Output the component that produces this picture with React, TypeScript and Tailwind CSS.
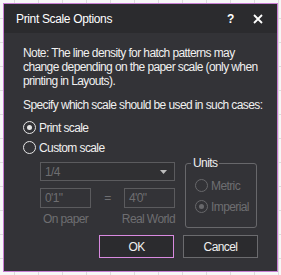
import React from "react";

const font = { fontFamily: '"Liberation Sans", Arial, sans-serif' };

function Radio({ checked, disabled, label }: { checked?: boolean; disabled?: boolean; label: string }) {
  const ring = disabled ? "border-[#68686b]" : "border-[#e6e6e6]";
  const dot = disabled ? "bg-[#68686b]" : "bg-[#e6e6e6]";
  return (
    <div className={`flex h-[15px] items-center gap-[3px] ${disabled ? "text-[#6e6e71]" : "text-[#f0f0f0]"}`}>
      <span className={`flex h-[13px] w-[13px] shrink-0 items-center justify-center rounded-full border ${ring}`}>
        {checked && <span className={`h-[5px] w-[5px] rounded-full ${dot}`} />}
      </span>
      <span>{label}</span>
    </div>
  );
}

export default function App() {
  return (
    <div
      className="h-[275px] w-[281px] p-[3px] bg-[#f7f7f7] bg-[linear-gradient(#dcdcdc_1px,transparent_1px),linear-gradient(90deg,#dcdcdc_1px,transparent_1px)] bg-[length:24px_24px] bg-[position:-10px_-6px]"
      style={font}
    >
      <div className="flex h-full flex-col border border-[#c87ed3] bg-[#333337] text-[12px] tracking-[-0.6px]">
        {/* Title bar */}
        <div className="flex h-[29px] items-center bg-[#2b2b2e] pl-[12px] pr-[14px] text-white tracking-[-0.35px]">
          <span className="flex-1">Print Scale Options</span>
          <span className="mr-[19px] font-bold">?</span>
          <svg width="10" height="10" viewBox="0 0 10 10">
            <path d="M1 1L9 9M9 1L1 9" stroke="white" strokeWidth="1.8" />
          </svg>
        </div>

        {/* Body */}
        <div className="flex flex-1 flex-col px-[19px] pt-[13px] leading-[14px] text-[#f0f0f0]">
          <p>
            Note: The line density for hatch patterns may change depending on the paper scale (only when
            printing in Layouts).
          </p>

          <p className="mt-[10px] whitespace-nowrap">Specify which scale should be used in such cases:</p>

          <div className="mt-[8px] flex flex-col gap-[5px]">
            <Radio checked label="Print scale" />
            <Radio label="Custom scale" />
          </div>

          <div className="mt-[7px] flex">
            {/* Scale inputs */}
            <div className="ml-[17px] flex w-[135px] flex-col text-[#6e6e71]">
              <div className="flex h-[19px] items-center justify-between border border-[#5b5b5e] bg-[#303033] pl-[4px] pr-[7px]">
                <span>1/4</span>
                <svg width="7" height="4" viewBox="0 0 7 4">
                  <path d="M0 0H7L3.5 4Z" fill="#bdbdbd" />
                </svg>
              </div>
              <div className="mt-[7px] flex items-center">
                <div className="flex h-[20px] w-[51px] items-center border border-[#5b5b5e] pl-[4px]">0'1"</div>
                <span className="flex-1 text-center">=</span>
                <div className="flex h-[20px] w-[51px] items-center border border-[#5b5b5e] pl-[4px]">4'0"</div>
              </div>
              <div className="mt-[4px] flex justify-between">
                <span className="pl-[3px]">On paper</span>
                <span>Real World</span>
              </div>
            </div>

            {/* Units group */}
            <div className="relative ml-[10px] mt-[1px] h-[65px] w-[72px] rounded-[3px] border border-[#68686b]">
              <span className="absolute -top-[8px] left-[5px] bg-[#333337] px-[2px] text-[#f0f0f0]">Units</span>
              <div className="mt-[14px] flex flex-col gap-[6px] pl-[9px]">
                <Radio disabled label="Metric" />
                <Radio disabled checked label="Imperial" />
              </div>
            </div>
          </div>

          {/* Buttons */}
          <div className="mt-[7px] flex justify-end gap-[9px]">
            <button className="h-[23px] w-[75px] border border-[#d98ae0] bg-[#2b2b2e] text-[#f0f0f0]">OK</button>
            <button className="h-[23px] w-[75px] border border-[#6b6b6e] bg-[#2b2b2e] text-[#f0f0f0]">Cancel</button>
          </div>
        </div>
      </div>
    </div>
  );
}
